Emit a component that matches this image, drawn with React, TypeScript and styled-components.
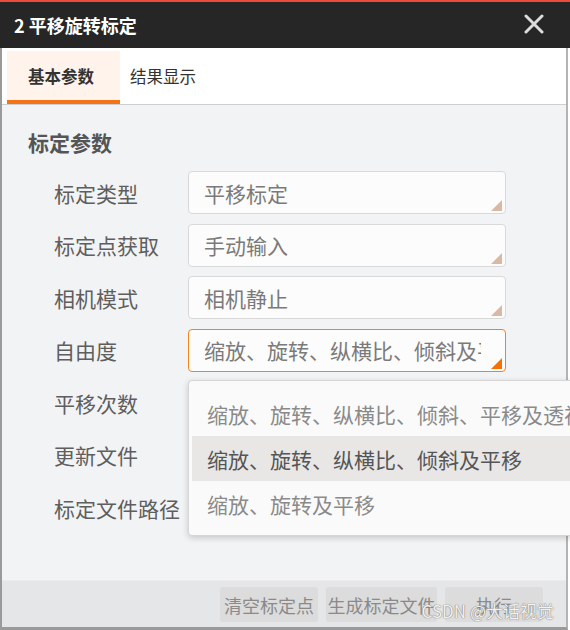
import styled, { createGlobalStyle } from "styled-components";

const GlobalStyle = createGlobalStyle`
  html, body {
    margin: 0;
    padding: 0;
    background: #ffffff;
    overflow: hidden;
  }
  body {
    font-family: "Noto Sans CJK SC", "Noto Sans", sans-serif;
  }
`;

const Window = styled.div`
  position: relative;
  width: 570px;
  height: 630px;
  display: flex;
  flex-direction: column;
  box-sizing: border-box;
`;

const TitleBar = styled.div`
  height: 46px;
  border-top: 2px solid #ee4a3c;
  background: #262626;
  display: flex;
  align-items: center;
  justify-content: space-between;
  padding: 0 26px 0 14px;
`;

const Title = styled.div`
  color: #ffffff;
  font-size: 18px;
  font-weight: 700;
  line-height: 1;
`;

const CloseButton = styled.div`
  width: 20px;
  height: 20px;
  display: flex;
  margin-top: -2px;
`;

const Body = styled.div`
  flex: 1;
  display: flex;
  flex-direction: column;
  margin-right: 2px;
  border-left: 2px solid #9a9a9a;
  border-right: 2px solid #b4b4b4;
  border-bottom: 3px solid #9a9a9a;
`;

const TabBar = styled.div`
  height: 57px;
  box-sizing: border-box;
  background: #ffffff;
  border-bottom: 1px solid #cfcfcf;
  display: flex;
  align-items: flex-end;
  padding-left: 5px;
`;

const Tab = styled.div<{ $active?: boolean }>`
  height: 53px;
  box-sizing: border-box;
  display: flex;
  align-items: center;
  padding: ${(p) => (p.$active ? "0 26px 0 21px" : "0 10px")};
  font-size: 16.5px;
  color: #333333;
  font-weight: ${(p) => (p.$active ? 700 : 400)};
  background: ${(p) => (p.$active ? "#fff3ec" : "transparent")};
  border-bottom: 4px solid ${(p) => (p.$active ? "#f47316" : "transparent")};
`;

const Content = styled.div`
  position: relative;
  flex: 1;
  background: #f2f3f5;
  padding: 22px 0 0 26px;
`;

const Heading = styled.div`
  font-size: 21px;
  font-weight: 700;
  color: #555555;
  line-height: 30px;
  margin-bottom: 14px;
`;

const Form = styled.div`
  display: grid;
  grid-template-columns: 134px 318px;
  row-gap: 9.5px;
  padding-left: 26px;
`;

const Label = styled.div`
  font-size: 21px;
  color: #5e5e5e;
  height: 43px;
  display: flex;
  align-items: center;
  white-space: nowrap;
`;

const Field = styled.div<{ $focused?: boolean }>`
  position: relative;
  height: 43px;
  box-sizing: border-box;
  border: ${(p) => (p.$focused ? "1.5px solid #f58220" : "1px solid #d9d9d9")};
  border-radius: 4px;
  background: #fcfcfc;
  display: flex;
  align-items: center;
  padding: 0 24px 0 15px;
`;

const Value = styled.span`
  flex: 1;
  min-width: 0;
  overflow: hidden;
  white-space: nowrap;
  font-size: 21px;
  color: #7a7a7a;
`;

const Grip = styled.span<{ $focused?: boolean }>`
  position: absolute;
  right: 3px;
  bottom: 2px;
  width: 0;
  height: 0;
  border-left: 11px solid transparent;
  border-bottom: 11px solid ${(p) => (p.$focused ? "#f57208" : "#d9b9a3")};
`;

const Dropdown = styled.div`
  position: absolute;
  left: 186px;
  top: 275px;
  width: 400px;
  height: 156px;
  box-sizing: border-box;
  background: #fafafa;
  border: 1px solid #d6d6d6;
  border-radius: 4px;
  box-shadow: 0 2px 6px rgba(0, 0, 0, 0.18);
  padding-top: 10px;
  z-index: 5;
`;

const Option = styled.div<{ $hover?: boolean }>`
  height: 45px;
  display: flex;
  align-items: center;
  padding-left: 15px;
  margin-left: 3px;
  font-size: 21px;
  white-space: nowrap;
  color: ${(p) => (p.$hover ? "#555555" : "#8a8a8a")};
  background: ${(p) => (p.$hover ? "#e8e7e6" : "transparent")};
`;

const Footer = styled.div`
  height: 47px;
  box-sizing: border-box;
  background: #e5e6e7;
  border-top: 1px solid #ececec;
  display: flex;
  justify-content: flex-end;
  align-items: flex-start;
  gap: 8px;
  padding: 6px 23px 0 0;
`;

const Button = styled.div<{ $width: number }>`
  width: ${(p) => p.$width}px;
  height: 35px;
  border-radius: 3px;
  background: #dcdcdc;
  display: flex;
  align-items: center;
  justify-content: center;
  font-size: 18px;
  line-height: 1;
  color: #8a8a8a;
  white-space: nowrap;
`;

const Watermark = styled.div`
  position: absolute;
  right: 16px;
  bottom: 7px;
  font-size: 17px;
  color: rgba(255, 255, 255, 0.92);
  text-shadow: 0 0 1px #777, 0 0 1px #777;
  z-index: 10;
`;

const rows = [
  { label: "标定类型", value: "平移标定" },
  { label: "标定点获取", value: "手动输入" },
  { label: "相机模式", value: "相机静止" },
  { label: "自由度", value: "缩放、旋转、纵横比、倾斜及平移", focused: true },
  { label: "平移次数", value: "" },
  { label: "更新文件", value: "" },
  { label: "标定文件路径", value: "" },
];

const options = [
  "缩放、旋转、纵横比、倾斜、平移及透视",
  "缩放、旋转、纵横比、倾斜及平移",
  "缩放、旋转及平移",
];

export default function App() {
  return (
    <Window>
      <GlobalStyle />
      <TitleBar>
        <Title>2 平移旋转标定</Title>
        <CloseButton>
          <svg width="20" height="20" viewBox="0 0 20 20">
            <path d="M2 2 L18 18 M18 2 L2 18" stroke="#dddddd" strokeWidth="3" strokeLinecap="round" />
          </svg>
        </CloseButton>
      </TitleBar>
      <Body>
        <TabBar>
          <Tab $active>基本参数</Tab>
          <Tab>结果显示</Tab>
        </TabBar>
        <Content>
          <Heading>标定参数</Heading>
          <Form>
            {rows.map((r) => [
              <Label key={r.label + "-l"}>{r.label}</Label>,
              <Field key={r.label + "-f"} $focused={r.focused}>
                <Value>{r.value}</Value>
                <Grip $focused={r.focused} />
              </Field>,
            ])}
          </Form>
          <Dropdown>
            {options.map((o, i) => (
              <Option key={o} $hover={i === 1}>
                {o}
              </Option>
            ))}
          </Dropdown>
        </Content>
        <Footer>
          <Button $width={98}>清空标定点</Button>
          <Button $width={111}>生成标定文件</Button>
          <Button $width={98}>执行</Button>
        </Footer>
      </Body>
      <Watermark>CSDN @大话视觉</Watermark>
    </Window>
  );
}
